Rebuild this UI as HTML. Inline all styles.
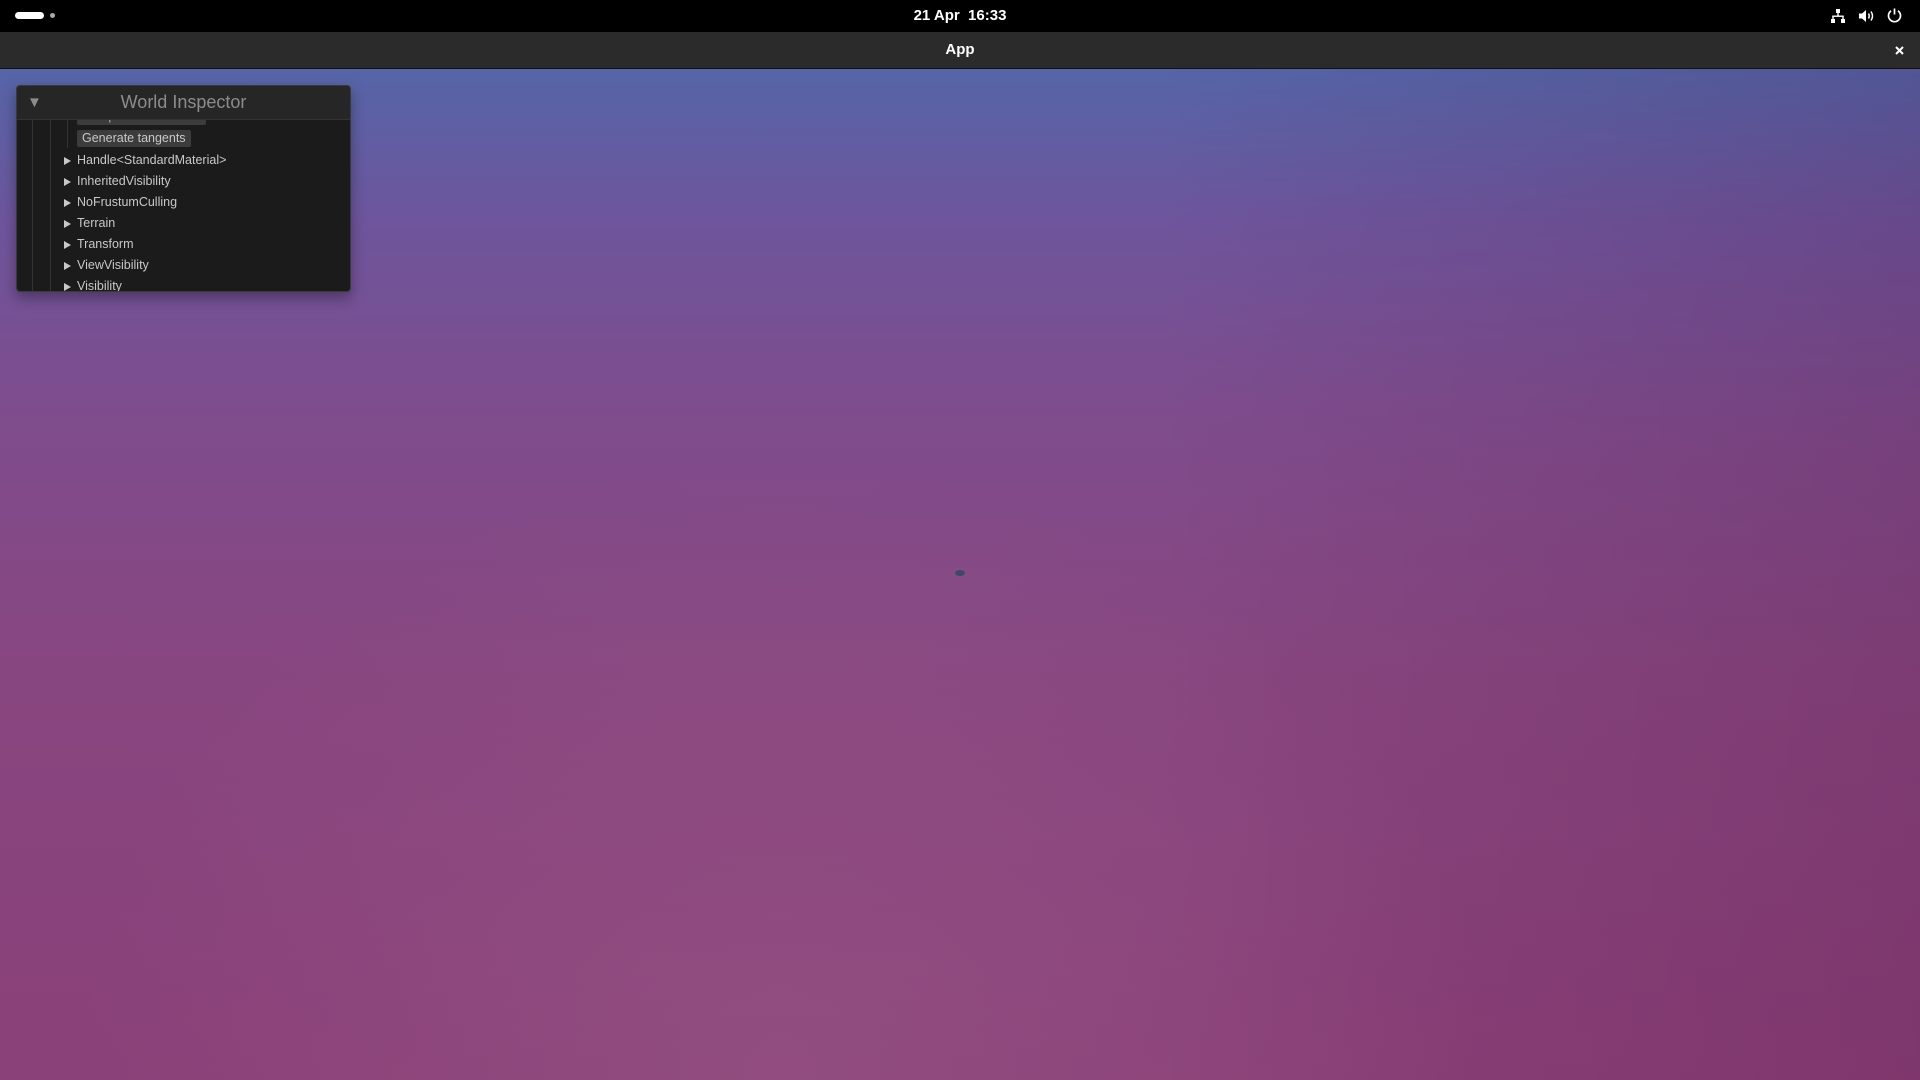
<!DOCTYPE html>
<html><head><style>
html,body{margin:0;width:1920px;height:1080px;overflow:hidden;font-family:"Liberation Sans",sans-serif}
#bg{position:absolute;left:0;top:68px;width:1920px;height:1012px;
background:linear-gradient(180deg,#5565a8 0%,#6e559c 15%,#7f4c8c 35%,#884680 60%,#8a4078 100%);}
#bg2{position:absolute;left:0;top:68px;width:1920px;height:1012px;
background:radial-gradient(ellipse 700px 600px at 780px 1000px,rgba(160,100,140,0.35),transparent),linear-gradient(90deg,rgba(0,0,0,0) 60%,rgba(60,0,40,0.15) 100%);}
#top{position:absolute;left:0;top:0;width:1920px;height:32px;background:#000;color:#fff;font-weight:bold;font-size:15px}
#title{position:absolute;left:0;top:32px;width:1920px;height:36px;background:#2b2b2b;color:#fff;font-weight:bold;font-size:15px;text-align:center;line-height:36px;border-bottom:1px solid #111}
#panel{position:absolute;left:16px;top:85px;width:333px;height:205px;background:#1b1b1b;border:1px solid #3a3a3a;border-radius:4px;box-shadow:0 6px 14px rgba(0,0,0,.35);overflow:hidden;color:#c8c8c8;font-size:12.5px}
#hdr{height:33px;background:#262626;border-bottom:1px solid #333;color:#8c8c8c;font-size:18px;text-align:center;line-height:32px;position:relative;z-index:2}
.row{position:absolute;left:60px;height:21px;line-height:21px}
.row:before{content:"";position:absolute;left:-13px;top:7px;border-left:7px solid #c8c8c8;border-top:4px solid transparent;border-bottom:4px solid transparent}
.btn{position:absolute;left:60px;background:#3c3c3c;border-radius:2px;padding:0 5px;height:17px;line-height:17px}
.vl{position:absolute;width:1px;background:#333}
</style></head><body>
<div id="bg"></div><div id="bg2"></div>
<div id="top">
<div style="position:absolute;left:15px;top:12px;width:29px;height:7px;background:#fff;border-radius:4px"></div>
<div style="position:absolute;left:50px;top:13px;width:5px;height:5px;background:#aaa;border-radius:50%"></div>
<div style="position:absolute;left:0;width:1920px;text-align:center;line-height:31px">21 Apr&nbsp; 16:33</div>
<svg style="position:absolute;left:1830px;top:8px" width="16" height="16" viewBox="0 0 16 16" fill="#fff"><rect x="6" y="1" width="4" height="4"/><rect x="1" y="11" width="4" height="4"/><rect x="11" y="11" width="4" height="4"/><rect x="7.3" y="5" width="1.4" height="3"/><rect x="2.3" y="7.5" width="11.4" height="1.4"/><rect x="2.3" y="8" width="1.4" height="3"/><rect x="12.3" y="8" width="1.4" height="3"/></svg>
<svg style="position:absolute;left:1858px;top:8px" width="17" height="16" viewBox="0 0 17 16" fill="none" stroke="#fff" stroke-width="1.5"><path d="M1 5.5h3l4-3.5v12l-4-3.5H1z" fill="#fff" stroke="none"/><path d="M10.5 5.5q1.5 2.5 0 5"/><path d="M13 3.5q3 4.5 0 9"/></svg>
<svg style="position:absolute;left:1886px;top:7px" width="17" height="17" viewBox="0 0 17 17" fill="none" stroke="#fff" stroke-width="1.7"><path d="M8.5 1.5v6"/><path d="M5 3.8a6 6 0 1 0 7 0"/></svg>
</div>
<div id="title">App<svg style="position:absolute;right:16px;top:14px" width="9" height="9" viewBox="0 0 9 9" stroke="#fff" stroke-width="2"><path d="M1 1l7 7M8 1l-7 7"/></svg></div>
<div id="panel">
<div id="hdr"><span style="position:absolute;left:10px;top:1px;font-size:15px">▼</span>World Inspector</div>
<div class="vl" style="left:15px;top:34px;height:171px"></div>
<div class="vl" style="left:33px;top:34px;height:171px"></div>
<div class="vl" style="left:50px;top:34px;height:28px"></div>
<div class="btn" style="top:22px;color:#aaa">Compute flat normals</div>
<div class="btn" style="top:44px">Generate tangents</div>
<div class="row" style="top:64px">Handle&lt;StandardMaterial&gt;</div>
<div class="row" style="top:85px">InheritedVisibility</div>
<div class="row" style="top:106px">NoFrustumCulling</div>
<div class="row" style="top:127px">Terrain</div>
<div class="row" style="top:148px">Transform</div>
<div class="row" style="top:169px">ViewVisibility</div>
<div class="row" style="top:190px">Visibility</div>
</div>
<div style="position:absolute;left:955px;top:570px;width:10px;height:6px;background:#3c4a66;border-radius:50%"></div>
</body></html>
